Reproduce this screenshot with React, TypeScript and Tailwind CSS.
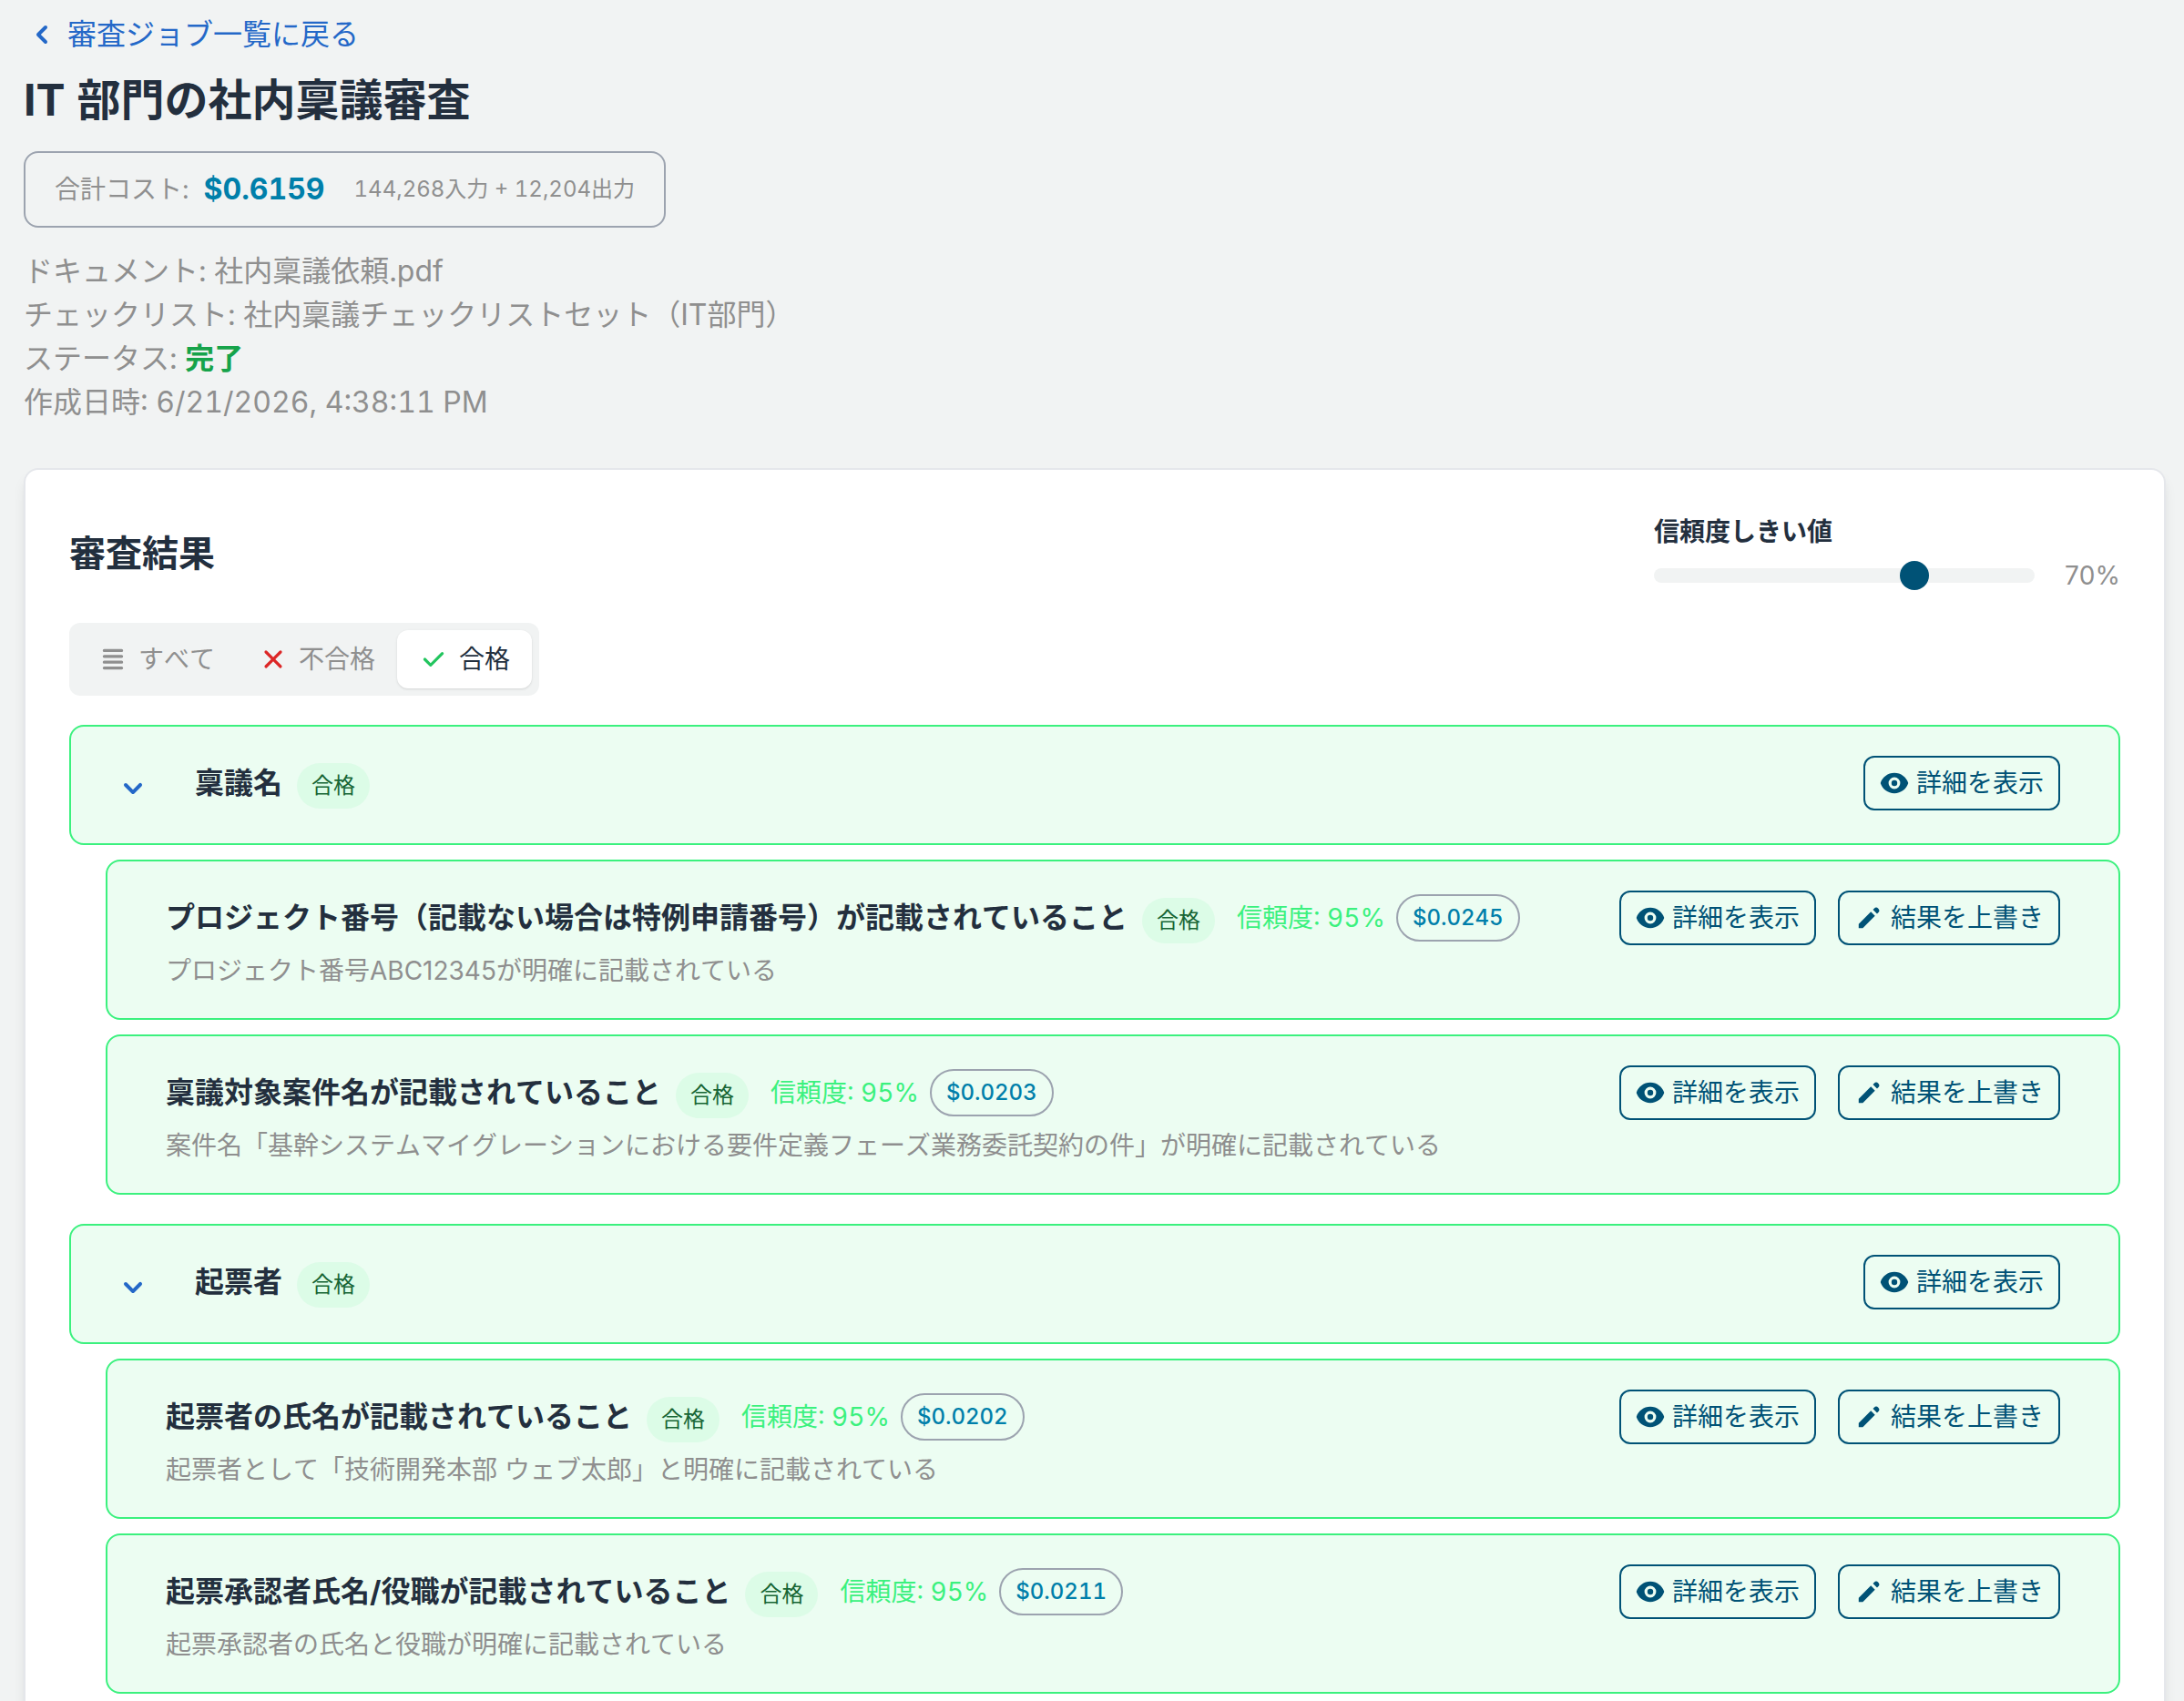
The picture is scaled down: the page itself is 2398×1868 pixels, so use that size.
import { useState } from 'react';
import { HiCheck, HiChevronDown, HiChevronLeft, HiEye, HiPencil, HiViewList, HiX } from 'react-icons/hi';

type CheckItem = {
  id: string;
  name: string;
  confidence: number;
  cost: string;
  explanation: string;
};

type CheckGroup = {
  id: string;
  name: string;
  items: CheckItem[];
};

const groups: CheckGroup[] = [
  {
    id: 'ringi-name',
    name: '稟議名',
    items: [
      {
        id: 'project-number',
        name: 'プロジェクト番号（記載ない場合は特例申請番号）が記載されていること',
        confidence: 95,
        cost: '$0.0245',
        explanation: 'プロジェクト番号ABC12345が明確に記載されている',
      },
      {
        id: 'subject-name',
        name: '稟議対象案件名が記載されていること',
        confidence: 95,
        cost: '$0.0203',
        explanation: '案件名「基幹システムマイグレーションにおける要件定義フェーズ業務委託契約の件」が明確に記載されている',
      },
    ],
  },
  {
    id: 'drafter',
    name: '起票者',
    items: [
      {
        id: 'drafter-name',
        name: '起票者の氏名が記載されていること',
        confidence: 95,
        cost: '$0.0202',
        explanation: '起票者として「技術開発本部 ウェブ太郎」と明確に記載されている',
      },
      {
        id: 'approver-name',
        name: '起票承認者氏名/役職が記載されていること',
        confidence: 95,
        cost: '$0.0211',
        explanation: '起票承認者の氏名と役職が明確に記載されている',
      },
    ],
  },
];

const filters = [
  { id: 'all', name: 'すべて', icon: HiViewList, iconColor: '' },
  { id: 'fail', name: '不合格', icon: HiX, iconColor: 'text-[#dc2626]' },
  { id: 'pass', name: '合格', icon: HiCheck, iconColor: 'text-[#22c55e]' },
];

function PassBadge() {
  return (
    <span className="mt-1.5 shrink-0 rounded-full bg-[#dcfce7] px-4 py-2 text-[24px] leading-[34px] text-[#166534]">
      合格
    </span>
  );
}

function OutlineButton({ icon: Icon, label }: { icon: typeof HiEye; label: string }) {
  return (
    <button
      type="button"
      className="flex h-[60px] shrink-0 items-center gap-2 rounded-xl border-2 border-[#005276] px-4 text-[28px] leading-10 text-[#005276] hover:bg-white"
    >
      <Icon className="size-8" />
      {label}
    </button>
  );
}

function ItemCard({ item }: { item: CheckItem }) {
  return (
    <li className="rounded-2xl border-2 border-[#3bf17e] bg-[#ecfdf2] px-16 py-8">
      <div className="flex items-center justify-between gap-6">
        <div className="flex min-h-[60px] items-center">
          <h4 className="mr-4 text-[32px] leading-[48px] font-bold text-[#232f3e]">{item.name}</h4>
          <PassBadge />
          <span className="mr-3 ml-6 shrink-0 text-[28px] leading-10 text-[#3bf17e]">信頼度: {item.confidence}%</span>
          <span className="shrink-0 rounded-full border-2 border-[#9ca3af] px-4 py-2 text-[24px] leading-8 font-medium text-[#007faa]">
            {item.cost}
          </span>
        </div>
        <div className="flex gap-6">
          <OutlineButton icon={HiEye} label="詳細を表示" />
          <OutlineButton icon={HiPencil} label="結果を上書き" />
        </div>
      </div>
      <p className="mt-2 text-[28px] leading-10 text-[#8f8f8f] normal-nums">{item.explanation}</p>
    </li>
  );
}

function GroupSection({ group }: { group: CheckGroup }) {
  const [open, setOpen] = useState(true);

  return (
    <section>
      <div className="flex min-h-[132px] items-start justify-between rounded-2xl border-2 border-[#3bf17e] bg-[#ecfdf2] py-8 pr-16 pl-12">
        <div className="flex h-[60px] items-center">
          <button
            type="button"
            aria-label={`${group.name}を開閉`}
            aria-expanded={open}
            onClick={() => setOpen(!open)}
            className="mt-3 mr-12 text-[#2468c8]"
          >
            <HiChevronDown className={`size-10 ${open ? '' : '-rotate-90'}`} />
          </button>
          <h3 className="mr-4 text-[32px] leading-[48px] font-bold text-[#232f3e]">{group.name}</h3>
          <PassBadge />
        </div>
        <OutlineButton icon={HiEye} label="詳細を表示" />
      </div>
      {open && (
        <ul className="mt-4 ml-10 space-y-4">
          {group.items.map((item) => (
            <ItemCard key={item.id} item={item} />
          ))}
        </ul>
      )}
    </section>
  );
}

export default function App() {
  const [filter, setFilter] = useState('pass');
  const [threshold, setThreshold] = useState(70);

  const visibleGroups = filter === 'fail' ? [] : groups;

  return (
    <div className="min-h-screen bg-[#f1f3f3] pt-[14px] pr-5 pb-12 pl-[26px] font-['Inter','Noto_Sans_CJK_JP',sans-serif] tabular-nums [font-kerning:none]">
      <a href="#jobs" className="flex w-fit items-center gap-2 text-[32px] leading-[48px] text-[#2468c8]">
        <HiChevronLeft className="size-10" />
        審査ジョブ一覧に戻る
      </a>
      <h1 className="mt-4 text-[48px] leading-[64px] font-bold text-[#232f3e]">IT 部門の社内稟議審査</h1>

      <div className="mt-6 flex h-[84px] w-fit items-center rounded-2xl border-2 border-[#9ca3af] px-8 text-[#8f8f8f]">
        <span className="text-[28px] leading-10">合計コスト:</span>
        <span className="mr-8 ml-4 text-[32px] leading-[48px] font-bold text-[#007faa]">$0.6159</span>
        <span className="text-[24px] leading-8">144,268入力 + 12,204出力</span>
      </div>

      <div className="mt-6 text-[32px] leading-[48px] text-[#8f8f8f]">
        <p>ドキュメント: 社内稟議依頼.pdf</p>
        <p>チェックリスト: 社内稟議チェックリストセット（IT部門）</p>
        <p>
          ステータス: <span className="font-bold text-[#16a34a]">完了</span>
        </p>
        <p>作成日時: 6/21/2026, 4:38:11 PM</p>
      </div>

      <main className="mt-12 rounded-2xl border-2 border-gray-200 bg-white p-12 shadow-lg">
        <div className="flex items-center justify-between">
          <h2 className="text-[40px] leading-[56px] font-bold text-[#232f3e]">審査結果</h2>
          <div className="w-[512px]">
            <label htmlFor="threshold" className="mb-2 block text-[28px] leading-10 font-bold text-[#232f3e]">
              信頼度しきい値
            </label>
            <div className="flex items-center gap-8">
              <input
                id="threshold"
                type="range"
                min={0}
                max={100}
                value={threshold}
                onChange={(e) => setThreshold(Number(e.target.value))}
                className="h-4 min-w-0 flex-1 cursor-pointer appearance-none rounded-full bg-[#f1f3f3] [&::-webkit-slider-thumb]:size-8 [&::-webkit-slider-thumb]:appearance-none [&::-webkit-slider-thumb]:rounded-full [&::-webkit-slider-thumb]:bg-[#005276]"
              />
              <span className="w-[62px] text-right text-[28px] leading-10 text-[#8f8f8f] normal-nums">{threshold}%</span>
            </div>
          </div>
        </div>

        <div className="mt-8 flex w-fit rounded-xl bg-[#f1f3f3] p-2">
          {filters.map((tab) => (
            <button
              key={tab.id}
              type="button"
              onClick={() => setFilter(tab.id)}
              className={`flex items-center gap-3 rounded-xl px-6 py-3 text-[28px] leading-10 ${
                filter === tab.id ? 'bg-white text-[#232f3e] shadow-sm' : 'text-[#8f8f8f]'
              }`}
            >
              <tab.icon className={`size-8 ${tab.iconColor}`} />
              {tab.name}
            </button>
          ))}
        </div>

        <div className="mt-8 space-y-8">
          {visibleGroups.map((group) => (
            <GroupSection key={group.id} group={group} />
          ))}
        </div>
      </main>
    </div>
  );
}
